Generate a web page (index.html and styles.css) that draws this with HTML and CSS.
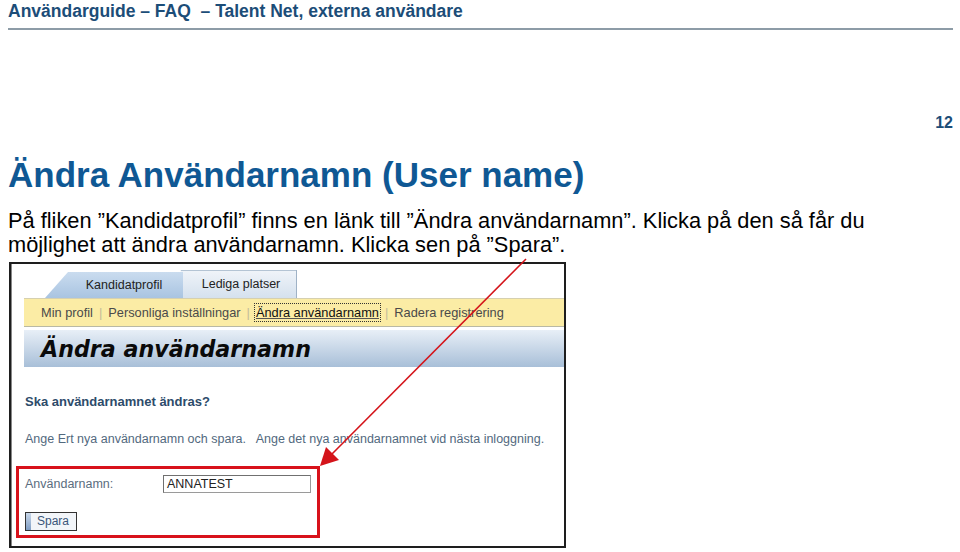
FILE: index.html
```html
<!DOCTYPE html>
<html lang="sv">
<head>
<meta charset="utf-8">
<title>Användarguide – FAQ</title>
<link rel="stylesheet" href="styles.css">
</head>
<body>
<div class="page">
  <header class="doc-head">Användarguide – FAQ &nbsp;– Talent Net, externa användare</header>
  <div class="page-num">12</div>
  <h1 class="title">Ändra Användarnamn (User name)</h1>
  <p class="intro">På fliken ”Kandidatprofil” finns en länk till ”Ändra användarnamn”. Klicka på den så får du möjlighet att ändra användarnamn. Klicka sen på ”Spara”.</p>

  <div class="shot">
    <div class="tabs">
      <div class="tab tab-active">Kandidatprofil</div>
      <div class="tab tab-idle">Lediga platser</div>
    </div>
    <nav class="subnav">
      <span class="lnk">Min profil</span><span class="sep">|</span><span class="lnk">Personliga inställningar</span><span class="sep">|</span><span class="lnk lnk-focus">Ändra användarnamn</span><span class="sep">|</span><span class="lnk">Radera registrering</span>
    </nav>
    <div class="banner">Ändra användarnamn</div>
    <div class="q">Ska användarnamnet ändras?</div>
    <div class="help">Ange Ert nya användarnamn och spara.&nbsp;&nbsp; Ange det nya användarnamnet vid nästa inloggning.</div>
    <div class="redbox">
      <div class="row">
        <span class="lbl">Användarnamn:</span>
        <span class="inp">ANNATEST</span>
      </div>
      <div class="btn"><span class="btn-strip"></span><span class="btn-txt">Spara</span></div>
    </div>
  </div>

  <svg class="arrow" width="960" height="552" viewBox="0 0 960 552">
    <line x1="526" y1="259" x2="330" y2="456" stroke="#d4141a" stroke-width="1.6"/>
    <polygon points="320,466 326,447 339,460" fill="#d4141a"/>
  </svg>
</div>
</body>
</html>
```

FILE: styles.css
```css
html, body { margin: 0; padding: 0; background: #fff; }
.page { position: relative; width: 960px; height: 552px; overflow: hidden; font-family: "Liberation Sans", Arial, sans-serif; }

.doc-head {
  margin: 0 7px 0 8px;
  padding-top: 1px;
  height: 27px;
  border-bottom: 2px solid #8d9ca7;
  font-weight: bold;
  font-size: 17.5px;
  line-height: 20px;
  color: #1c4d78;
  white-space: pre;
}
.page-num {
  margin: 84px 7px 0 0;
  text-align: right;
  font-weight: bold;
  font-size: 16px;
  line-height: 18px;
  color: #1c4d78;
}
.title {
  margin: 23px 0 0 8px;
  font-size: 35px;
  line-height: 40px;
  font-weight: bold;
  color: #0f5894;
}
.intro {
  margin: 14px 0 0 8px;
  width: 885px;
  font-size: 21.8px;
  line-height: 24px;
  color: #000;
}

.shot {
  margin: 5px 0 0 9px;
  width: 553px;
  height: 282px;
  border: 2px solid #1e1e1e;
  box-shadow: inset 1px 0 0 #888;
  background: #fff;
  font-family: "Liberation Sans", Tahoma, sans-serif;
  font-size: 12px;
}

.tabs { display: flex; align-items: flex-end; height: 34px; padding-left: 34px; }
.tab {
  height: 26px;
  display: flex; align-items: center; justify-content: center;
  color: #222;
  font-size: 12.5px;
}
.tab-active {
  position: relative; z-index: 2;
  width: 138px;
  padding-left: 20px; box-sizing: border-box;
  clip-path: polygon(23px 0, 100% 0, 100% 100%, 0 100%);
  background: linear-gradient(#cadcef, #a9c4e1);
}
.tab-idle {
  width: 124px; height: 28px;
  margin-left: -10px;
  padding-left: 12px; box-sizing: border-box;
  clip-path: polygon(8px 0, 100% 0, 100% 100%, 0 100%);
  background: linear-gradient(#f0f4f9, #d5e1ee);
  box-shadow: inset -1px 0 0 #9fb2c6, inset 0 1px 0 #b4c4d4;
}

.subnav {
  margin-left: 13px;
  height: 27px;
  border-top: 1px solid #d6d0b0;
  border-bottom: 1px solid #b9b9a4;
  background: #fbeca5;
  display: flex; align-items: center;
  padding-left: 17px;
  font-size: 12.8px;
  color: #4a4a4a;
}
.sep { color: #c2bb9a; margin: 0 6px; }
.lnk-focus { outline: 1px dotted #333; outline-offset: 1px; color: #111; text-decoration: underline; text-decoration-color: #555; }

.banner {
  margin: 3px 0 0 13px;
  height: 37px;
  background: linear-gradient(#e8eff7, #a8bfd8);
  padding-left: 17px;
  font-family: "DejaVu Sans", Verdana, sans-serif;
  font-weight: bold;
  font-style: italic;
  font-size: 22.2px;
  line-height: 38px;
  color: #0a0a0a;
}
.q {
  margin: 27px 0 0 14px;
  font-size: 13px;
  font-weight: bold;
  color: #2d4b6a;
}
.help {
  margin: 23px 0 0 14px;
  font-size: 12.5px;
  color: #52697e;
  white-space: pre;
}

.redbox {
  margin: 20px 0 0 5px;
  width: 298px;
  height: 66px;
  border: 3px solid #d8121b;
  padding: 0;
}
.row { display: flex; align-items: center; height: 24px; margin-top: 3px; padding-left: 6px; }
.lbl { width: 138px; color: #5b6d7e; font-size: 12.5px; }
.inp {
  width: 143px; height: 16px;
  border: 1px solid #9a9a9a;
  border-top-color: #707070; border-left-color: #707070;
  padding-left: 3px;
  font-size: 12.5px; line-height: 16px;
  color: #222;
}
.btn {
  margin: 16px 0 0 6px;
  width: 50px; height: 17px;
  border: 1px solid #333;
  display: flex;
  background: #f2f5f9;
}
.btn-strip { width: 5px; background: linear-gradient(#c9d8ea, #7f9dc4); }
.btn-txt { padding-left: 6px; font-size: 12px; line-height: 17px; color: #3a5679; }

.arrow { position: absolute; left: 0; top: 0; pointer-events: none; }
```
